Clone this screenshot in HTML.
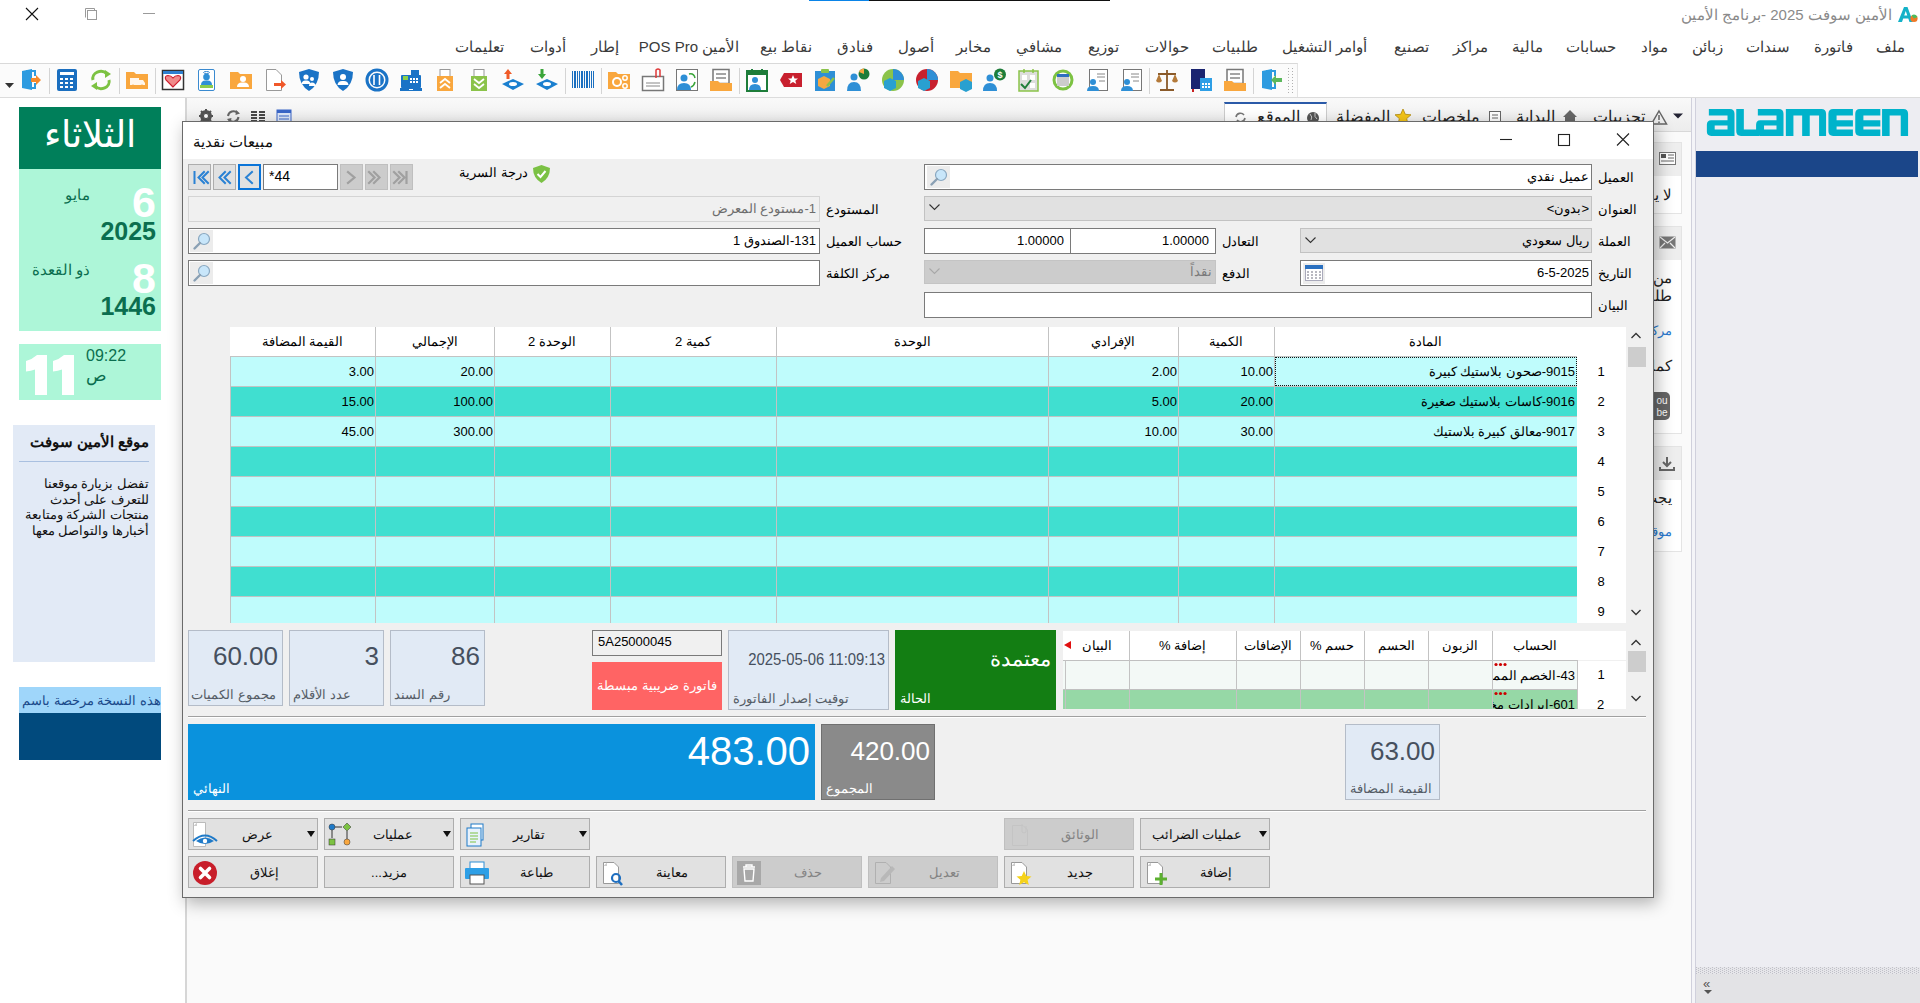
<!DOCTYPE html>
<html><head><meta charset="utf-8">
<style>
*{box-sizing:border-box;margin:0;padding:0}
html,body{width:1920px;height:1003px;overflow:hidden;background:#fff;font-family:"Liberation Sans",sans-serif;font-size:13px;color:#000}
.a{position:absolute}
.r{direction:rtl}
.t{white-space:nowrap}
svg{overflow:visible}
</style></head><body>
<div class="a" style="left:809px;top:0px;width:60px;height:1px;background:#0a84e8;"></div>
<div class="a" style="left:869px;top:0px;width:241px;height:1px;background:#111;"></div>
<svg class="a" style="left:0px;top:0px" width="200" height="30"><path d="M26 8 L38 20 M38 8 L26 20" stroke="#111" stroke-width="1.1" fill="none"/><rect x="87.5" y="10.5" width="9" height="9" fill="none" stroke="#9a9a9a"/><path d="M85.5 17.5 V8.5 H94.5 V10.5" fill="none" stroke="#9a9a9a"/><path d="M143 13.5 H155" stroke="#9a9a9a"/></svg>
<div class="a t r" style="top:3.0px;height:24px;line-height:24px;font-size:15px;color:#8a8a8a;right:28px;text-align:right;">الأمين سوفت 2025 -برنامج الأمين</div>
<svg class="a" style="left:1897px;top:5px" width="22" height="20"><path d="M1 17 L7 2 H10.5 L16 17 H12.5 L11.3 13.5 H6.2 L5 17Z M7.2 10.5 H10.3 L8.75 6Z" fill="#14b2c8" fill-rule="evenodd"/><circle cx="17" cy="13.5" r="3.6" fill="#f07a28"/><path d="M14.5 10.5 Q18 8 20.5 12 L17 13.5Z" fill="#4cbb5c"/></svg>
<div class="a t r" style="top:35.0px;height:24px;line-height:24px;font-size:15px;color:#3a3a3a;left:1790.0px;width:200px;text-align:center;">ملف</div>
<div class="a t r" style="top:35.0px;height:24px;line-height:24px;font-size:15px;color:#3a3a3a;left:1733.0px;width:200px;text-align:center;">فاتورة</div>
<div class="a t r" style="top:35.0px;height:24px;line-height:24px;font-size:15px;color:#3a3a3a;left:1668.0px;width:200px;text-align:center;">سندات</div>
<div class="a t r" style="top:35.0px;height:24px;line-height:24px;font-size:15px;color:#3a3a3a;left:1607.0px;width:200px;text-align:center;">زبائن</div>
<div class="a t r" style="top:35.0px;height:24px;line-height:24px;font-size:15px;color:#3a3a3a;left:1554.0px;width:200px;text-align:center;">مواد</div>
<div class="a t r" style="top:35.0px;height:24px;line-height:24px;font-size:15px;color:#3a3a3a;left:1490.5px;width:200px;text-align:center;">حسابات</div>
<div class="a t r" style="top:35.0px;height:24px;line-height:24px;font-size:15px;color:#3a3a3a;left:1427.0px;width:200px;text-align:center;">مالية</div>
<div class="a t r" style="top:35.0px;height:24px;line-height:24px;font-size:15px;color:#3a3a3a;left:1370.5px;width:200px;text-align:center;">مراكز</div>
<div class="a t r" style="top:35.0px;height:24px;line-height:24px;font-size:15px;color:#3a3a3a;left:1311.5px;width:200px;text-align:center;">تصنيع</div>
<div class="a t r" style="top:35.0px;height:24px;line-height:24px;font-size:15px;color:#3a3a3a;left:1224.5px;width:200px;text-align:center;">أوامر التشغيل</div>
<div class="a t r" style="top:35.0px;height:24px;line-height:24px;font-size:15px;color:#3a3a3a;left:1134.5px;width:200px;text-align:center;">طلبيات</div>
<div class="a t r" style="top:35.0px;height:24px;line-height:24px;font-size:15px;color:#3a3a3a;left:1066.5px;width:200px;text-align:center;">حوالات</div>
<div class="a t r" style="top:35.0px;height:24px;line-height:24px;font-size:15px;color:#3a3a3a;left:1003.0px;width:200px;text-align:center;">توزيع</div>
<div class="a t r" style="top:35.0px;height:24px;line-height:24px;font-size:15px;color:#3a3a3a;left:938.5px;width:200px;text-align:center;">مشافي</div>
<div class="a t r" style="top:35.0px;height:24px;line-height:24px;font-size:15px;color:#3a3a3a;left:873.5px;width:200px;text-align:center;">مخابر</div>
<div class="a t r" style="top:35.0px;height:24px;line-height:24px;font-size:15px;color:#3a3a3a;left:815.5px;width:200px;text-align:center;">أصول</div>
<div class="a t r" style="top:35.0px;height:24px;line-height:24px;font-size:15px;color:#3a3a3a;left:754.5px;width:200px;text-align:center;">فنادق</div>
<div class="a t r" style="top:35.0px;height:24px;line-height:24px;font-size:15px;color:#3a3a3a;left:686.0px;width:200px;text-align:center;">نقاط بيع</div>
<div class="a t r" style="top:35.0px;height:24px;line-height:24px;font-size:15px;color:#3a3a3a;left:589.0px;width:200px;text-align:center;">الأمين POS Pro</div>
<div class="a t r" style="top:35.0px;height:24px;line-height:24px;font-size:15px;color:#3a3a3a;left:504.5px;width:200px;text-align:center;">إطار</div>
<div class="a t r" style="top:35.0px;height:24px;line-height:24px;font-size:15px;color:#3a3a3a;left:448.0px;width:200px;text-align:center;">أدوات</div>
<div class="a t r" style="top:35.0px;height:24px;line-height:24px;font-size:15px;color:#3a3a3a;left:379.5px;width:200px;text-align:center;">تعليمات</div>
<div class="a" style="left:0px;top:63px;width:1298px;height:35px;background:#fbfbfb;border-top:1px solid #d9d9d9;border-bottom:1px solid #d9d9d9;border-right:1px solid #e4e4e4"></div>
<div class="a" style="left:49px;top:68px;width:1px;height:26px;background:#d4d4d4;"></div>
<div class="a" style="left:119px;top:68px;width:1px;height:26px;background:#d4d4d4;"></div>
<div class="a" style="left:155px;top:68px;width:1px;height:26px;background:#d4d4d4;"></div>
<div class="a" style="left:565px;top:68px;width:1px;height:26px;background:#d4d4d4;"></div>
<div class="a" style="left:601px;top:68px;width:1px;height:26px;background:#d4d4d4;"></div>
<div class="a" style="left:739px;top:68px;width:1px;height:26px;background:#d4d4d4;"></div>
<div class="a" style="left:1149px;top:68px;width:1px;height:26px;background:#d4d4d4;"></div>
<div class="a" style="left:1253px;top:68px;width:1px;height:26px;background:#d4d4d4;"></div>
<svg class="a" style="left:0px;top:0px" width="1300" height="100"><rect x="1288" y="68" width="1" height="1" fill="#b0b0b0"/><rect x="1292" y="68" width="1" height="1" fill="#b0b0b0"/><rect x="1288" y="71" width="1" height="1" fill="#b0b0b0"/><rect x="1292" y="71" width="1" height="1" fill="#b0b0b0"/><rect x="1288" y="74" width="1" height="1" fill="#b0b0b0"/><rect x="1292" y="74" width="1" height="1" fill="#b0b0b0"/><rect x="1288" y="77" width="1" height="1" fill="#b0b0b0"/><rect x="1292" y="77" width="1" height="1" fill="#b0b0b0"/><rect x="1288" y="80" width="1" height="1" fill="#b0b0b0"/><rect x="1292" y="80" width="1" height="1" fill="#b0b0b0"/><rect x="1288" y="83" width="1" height="1" fill="#b0b0b0"/><rect x="1292" y="83" width="1" height="1" fill="#b0b0b0"/><rect x="1288" y="86" width="1" height="1" fill="#b0b0b0"/><rect x="1292" y="86" width="1" height="1" fill="#b0b0b0"/><rect x="1288" y="89" width="1" height="1" fill="#b0b0b0"/><rect x="1292" y="89" width="1" height="1" fill="#b0b0b0"/><rect x="1288" y="92" width="1" height="1" fill="#b0b0b0"/><rect x="1292" y="92" width="1" height="1" fill="#b0b0b0"/></svg>
<svg class="a" style="left:4px;top:80px" width="12" height="10"><path d="M1 3 H10 L5.5 8Z" fill="#333"/></svg>
<svg class="a" style="left:19px;top:68px" width="24" height="24" viewBox="0 0 24 24"><path d="M3 3 L13 1 V22 L3 20Z" fill="#2d9be0"/><path d="M7 3 H16 V8" fill="none" stroke="#2d9be0" stroke-width="2"/><path d="M16 15 V20 H13" fill="none" stroke="#2d9be0" stroke-width="2"/><path d="M12 10 H17 V7 L22 12 L17 17 V14 H12Z" fill="#f58a2c"/></svg>
<svg class="a" style="left:55px;top:68px" width="24" height="24" viewBox="0 0 24 24"><rect x="2" y="1" width="20" height="22" rx="2" fill="#1b6fc0"/><rect x="5" y="4" width="14" height="3" fill="#fff"/><rect x="5" y="10" width="3" height="2" fill="#fff"/><rect x="5" y="14" width="3" height="2" fill="#fff"/><rect x="5" y="18" width="3" height="2" fill="#fff"/><rect x="10" y="10" width="3" height="2" fill="#fff"/><rect x="10" y="14" width="3" height="2" fill="#fff"/><rect x="10" y="18" width="3" height="2" fill="#fff"/><rect x="15" y="10" width="3" height="2" fill="#fff"/><rect x="15" y="14" width="3" height="2" fill="#fff"/><rect x="15" y="18" width="3" height="2" fill="#fff"/></svg>
<svg class="a" style="left:88.5px;top:68px" width="24" height="24" viewBox="0 0 24 24"><path d="M4 12 A8 7 0 0 1 18 6" fill="none" stroke="#7cc242" stroke-width="3"/><path d="M16 2 L22 6 L16 10Z" fill="#7cc242"/><path d="M20 12 A8 7 0 0 1 6 18" fill="none" stroke="#7cc242" stroke-width="3"/><path d="M8 14 L2 18 L8 22Z" fill="#7cc242"/></svg>
<svg class="a" style="left:125px;top:68px" width="24" height="24" viewBox="0 0 24 24"><path d="M1 4 H9 L11 6 H23 V21 H1Z" fill="#f9a73e"/><path d="M5 10 H14 V17 H5Z M14 12 H18 L20 15 V17 H14Z" fill="#fff" opacity=".9"/><circle cx="8" cy="18" r="1.6" fill="#f9a73e"/><circle cx="17" cy="18" r="1.6" fill="#f9a73e"/></svg>
<svg class="a" style="left:161px;top:68px" width="24" height="24" viewBox="0 0 24 24"><rect x="1.5" y="2.5" width="21" height="19" fill="#fff" stroke="#333" stroke-width="1.5"/><rect x="2" y="3" width="20" height="3" fill="#2f80d0"/><path d="M12 19 L5 12 Q3 8 7 7.5 Q10 7.5 12 10 Q14 7.5 17 7.5 Q21 8 19 12Z" fill="#f08a8a" stroke="#d02030" stroke-width="1.2"/></svg>
<svg class="a" style="left:195px;top:68px" width="24" height="24" viewBox="0 0 24 24"><rect x="3.5" y="1.5" width="16" height="21" rx="1.5" fill="#fff" stroke="#3a8ad0"/><circle cx="11.5" cy="9" r="3.3" fill="#2e8fd6"/><path d="M6 17 Q6 12 11.5 12.5 Q17 12 17 17Z" fill="#2e8fd6"/><rect x="5" y="17" width="13" height="3" fill="#8ccc4c"/><ellipse cx="11.5" cy="4.5" rx="3" ry="1" fill="none" stroke="#3a8ad0"/></svg>
<svg class="a" style="left:229px;top:68px" width="24" height="24" viewBox="0 0 24 24"><path d="M1 4 H9 L11 6 H23 V21 H1Z" fill="#f9a73e"/><circle cx="14" cy="11" r="3" fill="#fff"/><path d="M8 19 Q8 14 14 14.5 Q20 14 20 19Z" fill="#fff"/></svg>
<svg class="a" style="left:263px;top:68px" width="24" height="24" viewBox="0 0 24 24"><path d="M3.5 1.5 H13 L18.5 7 V22.5 H3.5Z" fill="#fff" stroke="#999"/><path d="M11 15 H18 V12 L23 16.5 L18 21 V18 H11Z" fill="#f0582a"/></svg>
<svg class="a" style="left:297px;top:68px" width="24" height="24" viewBox="0 0 24 24"><path d="M12 1 L22 4 Q22 17 12 23 Q2 17 2 4Z" fill="#1a73c6"/><circle cx="9" cy="9" r="2.6" fill="#fff"/><path d="M4.5 16 Q5 12 9 12.5 Q13 12 13.5 16Z" fill="#fff"/><circle cx="15" cy="11" r="2" fill="#fff"/><path d="M12 18 Q12 14.5 15 14.5 Q18.5 14.5 18.5 18Z" fill="#fff"/></svg>
<svg class="a" style="left:331px;top:68px" width="24" height="24" viewBox="0 0 24 24"><path d="M12 1 L22 4 Q22 17 12 23 Q2 17 2 4Z" fill="#1a73c6"/><circle cx="12" cy="9" r="3" fill="#fff"/><path d="M6.5 17 Q7 12.5 12 13 Q17 12.5 17.5 17Z" fill="#fff"/></svg>
<svg class="a" style="left:365px;top:68px" width="24" height="24" viewBox="0 0 24 24"><circle cx="12" cy="12" r="10" fill="none" stroke="#1a73c6" stroke-width="3"/><circle cx="12" cy="12" r="7" fill="#1a73c6"/><path d="M9 7 V17 M14.5 7 V17" stroke="#fff" stroke-width="1.6"/></svg>
<svg class="a" style="left:399px;top:68px" width="24" height="24" viewBox="0 0 24 24"><rect x="12" y="2" width="8" height="5" fill="#1a73c6"/><rect x="2" y="7" width="20" height="13" rx="1" fill="#1a73c6"/><rect x="4" y="8" width="5" height="4" fill="#8bd04a"/><rect x="11" y="10" width="2" height="2" fill="#fff"/><rect x="11" y="13" width="2" height="2" fill="#fff"/><rect x="14" y="10" width="2" height="2" fill="#fff"/><rect x="14" y="13" width="2" height="2" fill="#fff"/><rect x="17" y="10" width="2" height="2" fill="#fff"/><rect x="17" y="13" width="2" height="2" fill="#fff"/><rect x="1" y="20" width="22" height="3" fill="#1a73c6"/><rect x="10" y="21" width="4" height="1" fill="#fff"/></svg>
<svg class="a" style="left:433px;top:68px" width="24" height="24" viewBox="0 0 24 24"><rect x="7" y="1.5" width="10" height="7" fill="#fff" stroke="#999"/><rect x="4" y="8" width="16" height="15" fill="#f9a73e"/><path d="M7 15 L12 11 L17 15 M7 20 L12 16 L17 20" fill="none" stroke="#fff" stroke-width="1.8"/></svg>
<svg class="a" style="left:467px;top:68px" width="24" height="24" viewBox="0 0 24 24"><rect x="7" y="1.5" width="10" height="7" fill="#fff" stroke="#999"/><rect x="4" y="8" width="16" height="15" fill="#8bc34a"/><path d="M7 11 L12 15 L17 11 M7 16 L12 20 L17 16" fill="none" stroke="#fff" stroke-width="1.8"/></svg>
<svg class="a" style="left:500.5px;top:68px" width="24" height="24" viewBox="0 0 24 24"><path d="M1 16 L12 11 L23 16 L12 22Z" fill="#1a7fcf"/><ellipse cx="12" cy="16" rx="4" ry="2" fill="#fff"/><path d="M7 1 L11 6 H8.5 V11 H5.5 V6 H3Z" fill="#f05a28"/></svg>
<svg class="a" style="left:535px;top:68px" width="24" height="24" viewBox="0 0 24 24"><path d="M1 16 L12 11 L23 16 L12 22Z" fill="#1a7fcf"/><ellipse cx="12" cy="16" rx="4" ry="2" fill="#fff"/><path d="M5.5 1 H8.5 V6 H11 L7 11 L3 6 H5.5Z" fill="#3aa53a"/></svg>
<svg class="a" style="left:571px;top:68px" width="24" height="24" viewBox="0 0 24 24"><rect x="1" y="3" width="1" height="17" fill="#1a6fc0"/><rect x="3" y="3" width="2" height="17" fill="#1a6fc0"/><rect x="6" y="3" width="1" height="17" fill="#1a6fc0"/><rect x="8" y="3" width="1" height="17" fill="#1a6fc0"/><rect x="10" y="3" width="2" height="17" fill="#1a6fc0"/><rect x="13" y="3" width="1" height="17" fill="#1a6fc0"/><rect x="15" y="3" width="2" height="17" fill="#1a6fc0"/><rect x="18" y="3" width="1" height="17" fill="#1a6fc0"/><rect x="20" y="3" width="1" height="17" fill="#1a6fc0"/><rect x="22" y="3" width="1" height="17" fill="#1a6fc0"/></svg>
<svg class="a" style="left:607px;top:68px" width="24" height="24" viewBox="0 0 24 24"><path d="M1 4 H9 L11 6 H23 V21 H1Z" fill="#f9a73e"/><circle cx="10" cy="14" r="4" fill="none" stroke="#fff" stroke-width="2"/><circle cx="18" cy="10" r="2.2" fill="none" stroke="#fff" stroke-width="1.5"/><circle cx="18" cy="18" r="2.2" fill="none" stroke="#fff" stroke-width="1.5"/></svg>
<svg class="a" style="left:641px;top:68px" width="24" height="24" viewBox="0 0 24 24"><rect x="1.5" y="8.5" width="21" height="14" fill="#fff" stroke="#777" stroke-width="1.5"/><path d="M5 15 H19 M5 18 H19" stroke="#888"/><path d="M15 10 V2 Q17 0 19 2 V9" fill="none" stroke="#e03a3a" stroke-width="1.5"/></svg>
<svg class="a" style="left:675px;top:68px" width="24" height="24" viewBox="0 0 24 24"><rect x="1.5" y="1.5" width="21" height="21" fill="#fff" stroke="#777"/><circle cx="9" cy="10" r="3.5" fill="#2e8fd6"/><path d="M2 22 Q2 15 9 15 Q16 15 16 22Z" fill="#2e8fd6"/><path d="M14 6 Q19 5 20 10 M20 14 Q19 18 16 19" fill="none" stroke="#3aa53a" stroke-width="1.5"/></svg>
<svg class="a" style="left:709px;top:68px" width="24" height="24" viewBox="0 0 24 24"><rect x="4" y="1.5" width="16" height="14" fill="#fff" stroke="#777" stroke-width="1.5"/><path d="M7 6 H17 M7 10 H17" stroke="#888" stroke-width="1.5"/><path d="M1 13 H9 L11 15 H23 V23 H1Z" fill="#f9a73e"/></svg>
<svg class="a" style="left:744.5px;top:68px" width="24" height="24" viewBox="0 0 24 24"><rect x="2" y="3" width="20" height="20" fill="#fff" stroke="#1e7d3a" stroke-width="2"/><rect x="2" y="3" width="20" height="4" fill="#1e7d3a"/><path d="M7 1 V5 M17 1 V5" stroke="#1e7d3a" stroke-width="2"/><circle cx="10" cy="12" r="3" fill="#2e8fd6"/><path d="M4 22 Q4 16 10 16 Q16 16 16 22Z" fill="#2e8fd6"/></svg>
<svg class="a" style="left:779px;top:68px" width="24" height="24" viewBox="0 0 24 24"><path d="M5 5 H23 V19 H5 L1 12Z" fill="#c8202e"/><path d="M14 7 L15.5 10.5 H19 L16.3 12.7 L17.3 16 L14 14 L10.7 16 L11.7 12.7 L9 10.5 H12.5Z" fill="#fff"/></svg>
<svg class="a" style="left:813px;top:68px" width="24" height="24" viewBox="0 0 24 24"><rect x="2" y="3" width="20" height="20" fill="#2e8fd6"/><rect x="8" y="1" width="8" height="4" rx="1" fill="#8bc34a"/><path d="M5 11 L11 8 L17 11 V18 L11 21 L5 18Z" fill="#f5a742"/><path d="M14 18 L21 10" stroke="#8bc34a" stroke-width="2.5"/></svg>
<svg class="a" style="left:847px;top:68px" width="24" height="24" viewBox="0 0 24 24"><circle cx="7" cy="9" r="3.5" fill="#2e8fd6"/><path d="M0 23 Q0 14 7 14 Q14 14 14 23Z" fill="#2e8fd6"/><circle cx="17" cy="6" r="5.5" fill="#1e7d3a"/><path d="M17 6 V0.5 A5.5 5.5 0 0 0 12 4Z" fill="#f5a742"/></svg>
<svg class="a" style="left:881px;top:68px" width="24" height="24" viewBox="0 0 24 24"><circle cx="12" cy="12" r="11" fill="#8bc34a"/><path d="M12 12 V1 A11 11 0 0 1 23 12Z" fill="#2e8fd6"/><path d="M3 13 L9 10 L15 13 V20 L9 23 L3 20Z" fill="#29a0d0"/></svg>
<svg class="a" style="left:915px;top:68px" width="24" height="24" viewBox="0 0 24 24"><circle cx="12" cy="12" r="11" fill="#c8202e"/><path d="M12 12 V1 A11 11 0 0 1 23 12Z" fill="#2e8fd6"/><path d="M3 13 L9 10 L15 13 V20 L9 23 L3 20Z" fill="#29a0d0"/></svg>
<svg class="a" style="left:949px;top:68px" width="24" height="24" viewBox="0 0 24 24"><path d="M1 3 H9 L11 5 H23 V20 H1Z" fill="#f9a73e"/><path d="M11 14 L17 11 L23 14 V21 L17 24 L11 21Z" fill="#29a0d0"/></svg>
<svg class="a" style="left:983px;top:68px" width="24" height="24" viewBox="0 0 24 24"><circle cx="7" cy="10" r="3.5" fill="#2e8fd6"/><path d="M0 23 Q0 15 7 15 Q14 15 14 23Z" fill="#2e8fd6"/><circle cx="17" cy="6.5" r="6" fill="#1e7d3a"/><text x="17" y="10" font-size="9" font-weight="bold" fill="#fff" text-anchor="middle" font-family="Liberation Sans">$</text></svg>
<svg class="a" style="left:1017px;top:68px" width="24" height="24" viewBox="0 0 24 24"><rect x="2" y="3" width="19" height="20" fill="#ddd" stroke="#8bc34a" stroke-width="1.5"/><path d="M7 1 V5 M16 1 V5" stroke="#8bc34a" stroke-width="1.5"/><rect x="5" y="7" width="5" height="5" fill="#fff"/><rect x="13" y="7" width="5" height="5" fill="#fff"/><rect x="13" y="15" width="5" height="5" fill="#fff"/><path d="M4 16 L8 20 L14 12" fill="none" stroke="#1e7d3a" stroke-width="2"/></svg>
<svg class="a" style="left:1051px;top:68px" width="24" height="24" viewBox="0 0 24 24"><circle cx="12" cy="12" r="9" fill="none" stroke="#7cc242" stroke-width="3"/><rect x="6" y="6" width="12" height="12" fill="#ccc"/><rect x="6" y="6" width="12" height="3" fill="#2e6fc0"/></svg>
<svg class="a" style="left:1085px;top:68px" width="24" height="24" viewBox="0 0 24 24"><rect x="4.5" y="1.5" width="18" height="21" fill="#fff" stroke="#777"/><path d="M12 6 H20 M12 9 H20 M14 13 H20" stroke="#888"/><circle cx="8" cy="14" r="3" fill="#2e8fd6"/><path d="M2 23 Q2 18 8 18 Q14 18 14 23Z" fill="#2e8fd6"/></svg>
<svg class="a" style="left:1119px;top:68px" width="24" height="24" viewBox="0 0 24 24"><rect x="4.5" y="1.5" width="18" height="21" fill="#fff" stroke="#777"/><path d="M12 6 H20 M12 9 H20 M14 13 H20" stroke="#888"/><circle cx="8" cy="14" r="3" fill="#2e8fd6"/><path d="M2 23 Q2 18 8 18 Q14 18 14 23Z" fill="#2e8fd6"/></svg>
<svg class="a" style="left:1155px;top:68px" width="24" height="24" viewBox="0 0 24 24"><path d="M12 2 V21 M5 22 H19 M3 6 H21" stroke="#8a5a2a" stroke-width="1.8"/><path d="M1 13 L4 6 L7 13 Q4 16 1 13Z M17 13 L20 6 L23 13 Q20 16 17 13Z" fill="#b47a3a"/></svg>
<svg class="a" style="left:1189px;top:68px" width="24" height="24" viewBox="0 0 24 24"><rect x="2" y="1" width="14" height="20" fill="#1a2470"/><rect x="3" y="21" width="2" height="3" fill="#c82020"/><rect x="11" y="10" width="12" height="13" fill="#2e9fe6"/><rect x="13" y="15" width="2" height="2" fill="#fff"/><rect x="13" y="18" width="2" height="2" fill="#fff"/><rect x="16" y="15" width="2" height="2" fill="#fff"/><rect x="16" y="18" width="2" height="2" fill="#fff"/><rect x="19" y="15" width="2" height="2" fill="#fff"/><rect x="19" y="18" width="2" height="2" fill="#fff"/></svg>
<svg class="a" style="left:1223px;top:68px" width="24" height="24" viewBox="0 0 24 24"><rect x="4" y="1.5" width="16" height="14" fill="#fff" stroke="#777" stroke-width="1.5"/><path d="M7 6 H17 M7 10 H17" stroke="#888" stroke-width="1.5"/><path d="M1 13 H9 L11 15 H23 V23 H1Z" fill="#f9a73e"/></svg>
<svg class="a" style="left:1259px;top:68px" width="24" height="24" viewBox="0 0 24 24"><path d="M3 3 L13 1 V22 L3 20Z" fill="#2d9be0"/><path d="M7 3 H16 V8" fill="none" stroke="#2d9be0" stroke-width="2"/><path d="M16 15 V20 H13" fill="none" stroke="#2d9be0" stroke-width="2"/><path d="M23 10 H17 V7 L12 12 L17 17 V14 H23Z" fill="#5cb85c"/></svg>
<div class="a" style="left:0px;top:97px;width:1920px;height:1px;background:#dcdcdc;"></div>
<div class="a" style="left:185px;top:98px;width:1507px;height:905px;background:#fafafa;"></div>
<div class="a" style="left:185px;top:98px;width:2px;height:905px;background:#d6d6d6;"></div>
<div class="a" style="left:187px;top:98px;width:1504px;height:34px;background:linear-gradient(#f9f9f9,#ececec)"></div>
<div class="a" style="left:187px;top:131px;width:1504px;height:1px;background:#d8d8d8;"></div>
<svg class="a" style="left:198px;top:108px" width="100" height="16"><circle cx="8" cy="8" r="4.5" fill="none" stroke="#555" stroke-width="3"/><path d="M8 1 V15 M1 8 H15 M3 3 L13 13 M13 3 L3 13" stroke="#555" stroke-width="2"/><circle cx="8" cy="8" r="2" fill="#fff"/><path d="M30 8 A5.5 5.5 0 0 1 39.5 5 M40.5 9 A5.5 5.5 0 0 1 31 12" fill="none" stroke="#666" stroke-width="2"/><path d="M38 2 L42 5.5 L37.5 7Z M32.5 15 L29 11 L33.5 10Z" fill="#666"/><path d="M53 4 H59 M53 7 H59 M53 10 H59 M53 13 H59 M61 4 H67 M61 7 H67 M61 10 H67 M61 13 H67" stroke="#111" stroke-width="1.5"/><rect x="79" y="2" width="14" height="14" fill="#dde6f8" stroke="#3a66c8"/><rect x="79" y="2" width="14" height="3" fill="#3a66c8"/><path d="M81 8 H91 M81 11 H91 M81 14 H91" stroke="#3a66c8"/></svg>
<div class="a" style="left:1224px;top:102px;width:103px;height:30px;background:#fff;border-left:1px solid #ccc;border-right:1px solid #ccc;border-top:2px solid #2a5aa8"></div>
<div class="a t r" style="top:106.0px;height:22px;line-height:22px;font-size:16px;color:#222;right:620px;text-align:right;">الموقع</div>
<svg class="a" style="left:1306px;top:111px" width="14" height="14"><circle cx="7" cy="7" r="6" fill="#555"/><path d="M4 3 Q7 6 5 9 M9 2 Q8 6 11 8" stroke="#ccc" fill="none"/></svg>
<svg class="a" style="left:1234px;top:111px" width="13" height="13"><path d="M2 6 A4.5 4.5 0 0 1 10 4 M11 7 A4.5 4.5 0 0 1 3 9" fill="none" stroke="#777" stroke-width="1.6"/></svg>
<div class="a t r" style="top:106.0px;height:22px;line-height:22px;font-size:16px;color:#222;right:530px;text-align:right;">المفضلة</div>
<svg class="a" style="left:1394px;top:108px" width="18" height="18"><path d="M9 1 L11.3 6.3 L17 6.8 L12.7 10.6 L14 16.2 L9 13.2 L4 16.2 L5.3 10.6 L1 6.8 L6.7 6.3Z" fill="#f5c518" stroke="#b08a10" stroke-width=".8"/></svg>
<div class="a t r" style="top:106.0px;height:22px;line-height:22px;font-size:16px;color:#222;right:440px;text-align:right;">ملخصات</div>
<svg class="a" style="left:1488px;top:110px" width="14" height="14"><rect x="1.5" y="1.5" width="11" height="11" fill="#fff" stroke="#666"/><path d="M4 5 H10 M4 8 H10" stroke="#666"/></svg>
<div class="a t r" style="top:106.0px;height:22px;line-height:22px;font-size:16px;color:#222;right:365px;text-align:right;">البداية</div>
<svg class="a" style="left:1562px;top:109px" width="16" height="14"><path d="M8 1 L15 8 H13 V13 H3 V8 H1Z" fill="#666"/></svg>
<div class="a t r" style="top:106.0px;height:22px;line-height:22px;font-size:16px;color:#222;right:275px;text-align:right;">تجزيبات</div>
<svg class="a" style="left:1650px;top:109px" width="18" height="16"><path d="M9 2 L16.5 15 H1.5Z" fill="none" stroke="#666" stroke-width="1.5"/><path d="M9 6 V11 M9 12.5 V14" stroke="#666" stroke-width="1.5"/></svg>
<svg class="a" style="left:1672px;top:112px" width="12" height="8"><path d="M1 1.5 H11 L6 6.5Z" fill="#223"/></svg>
<div class="a" style="left:1640px;top:142px;width:42px;height:72px;background:#fff;border:1px solid #e4e4e4"></div>
<div class="a" style="left:1641px;top:143px;width:40px;height:33px;background:#eeeeee;"></div>
<div class="a" style="left:1640px;top:226px;width:42px;height:208px;background:#fff;border:1px solid #e4e4e4"></div>
<div class="a" style="left:1641px;top:227px;width:40px;height:33px;background:#eeeeee;"></div>
<div class="a" style="left:1640px;top:446px;width:42px;height:106px;background:#fff;border:1px solid #e4e4e4"></div>
<div class="a" style="left:1641px;top:447px;width:40px;height:33px;background:#eeeeee;"></div>
<svg class="a" style="left:1659px;top:152px" width="18" height="14"><rect x="0.5" y="0.5" width="16" height="12" fill="#fff" stroke="#777"/><rect x="2" y="2" width="5" height="4" fill="#555"/><path d="M9 3 H15 M9 6 H15 M2 9 H15" stroke="#666"/></svg>
<div class="a t r" style="top:185.0px;height:20px;line-height:20px;font-size:15px;color:#222;right:248px;text-align:right;">لا يوجد</div>
<svg class="a" style="left:1659px;top:236px" width="18" height="14"><rect x="0.5" y="0.5" width="16" height="12" fill="#777"/><path d="M1 1 L8.5 7 L16 1 M1 12 L6 7 M16 12 L11 7" stroke="#eee" stroke-width="1.2" fill="none"/></svg>
<div class="a t r" style="top:268.0px;height:20px;line-height:20px;font-size:15px;color:#222;right:248px;text-align:right;">من خلال</div>
<div class="a t r" style="top:286.0px;height:20px;line-height:20px;font-size:15px;color:#222;right:248px;text-align:right;">طلب الدعم</div>
<div class="a t r" style="top:321.0px;height:20px;line-height:20px;font-size:13px;color:#2a7ad0;right:248px;text-align:right;">مركز الدعم</div>
<div class="a t r" style="top:356.0px;height:20px;line-height:20px;font-size:15px;color:#222;right:248px;text-align:right;">كما يمكنك</div>
<svg class="a" style="left:1640px;top:392px" width="31" height="28"><rect x="0" y="0" width="30" height="28" rx="5" fill="#666"/><text x="22" y="12" font-size="10" fill="#fff" text-anchor="middle" font-family="Liberation Sans">ou</text><text x="22" y="24" font-size="10" fill="#fff" text-anchor="middle" font-family="Liberation Sans">be</text></svg>
<svg class="a" style="left:1659px;top:456px" width="16" height="16"><path d="M8 1 V10 M4 6 L8 10 L12 6 M1 11 V14 H15 V11" stroke="#666" stroke-width="2" fill="none"/></svg>
<div class="a t r" style="top:488.0px;height:20px;line-height:20px;font-size:15px;color:#222;right:248px;text-align:right;">يجب تحميل</div>
<div class="a t r" style="top:522.0px;height:20px;line-height:20px;font-size:13px;color:#2a7ad0;right:248px;text-align:right;">موقع التحميل</div>
<div class="a" style="left:1691px;top:98px;width:1px;height:905px;background:#d0d0dc;"></div>
<div class="a" style="left:1692px;top:98px;width:3px;height:905px;background:#f4f4f8;"></div>
<div class="a" style="left:1695px;top:98px;width:1px;height:905px;background:#d0d0dc;"></div>
<div class="a" style="left:1696px;top:98px;width:224px;height:905px;background:#ededf2;"></div>
<svg class="a" style="left:1696px;top:98px" width="224" height="82" viewBox="0 0 1920 703"><g fill="#00b3cb" fill-rule="evenodd"><path d="M110 95 H290 Q330 95 330 135 V325 H130 Q93 325 93 290 V230 Q93 190 130 190 H270 V150 H110Z M160 235 H270 V270 H160Z"/><path d="M345 95 H410 V270 H540 V325 H385 Q345 325 345 285Z"/><path d="M530 95 H710 Q750 95 750 135 V325 H550 Q515 325 515 290 V230 Q515 190 550 190 H690 V150 H530Z M583 235 H690 V270 H583Z"/><path d="M770 95 H1075 Q1115 95 1115 135 V325 H1055 V150 H975 V325 H910 V150 H835 V325 H770Z"/><path d="M1175 95 H1345 V150 H1205 V190 H1345 V245 H1205 V270 H1345 V325 H1175 Q1135 325 1135 285 V135 Q1135 95 1175 95Z"/><path d="M1405 95 H1580 V150 H1435 V190 H1580 V245 H1435 V270 H1580 V325 H1405 Q1365 325 1365 285 V135 Q1365 95 1405 95Z"/><path d="M1595 95 H1778 Q1818 95 1818 135 V325 H1755 V150 H1660 V325 H1595Z"/></g></svg>
<div class="a" style="left:1696px;top:151px;width:222px;height:26px;background:#1b4689;"></div>
<div class="a" style="left:1696px;top:967px;width:224px;height:7px;background:#e6e6ea;"></div>
<svg class="a" style="left:1696px;top:967px" width="224" height="7"><defs><pattern id="dp" width="4" height="2" patternUnits="userSpaceOnUse"><rect x="0" y="0" width="1" height="1" fill="#c0c0c8"/><rect x="2" y="1" width="1" height="1" fill="#c0c0c8"/></pattern></defs><rect width="224" height="7" fill="url(#dp)"/></svg>
<div class="a" style="left:1696px;top:974px;width:224px;height:29px;background:#e3e3e6;"></div>
<div class="a t" style="top:977.0px;height:14px;line-height:14px;font-size:13px;color:#555;left:1703px;">«</div>
<svg class="a" style="left:1703px;top:989px" width="10" height="6"><path d="M1 1 H9 L5 5Z" fill="#555"/></svg>
<div class="a" style="left:19px;top:107px;width:142px;height:62px;background:#007f5a;"></div>
<div class="a t r" style="top:109.5px;height:50px;line-height:50px;font-size:37px;color:#fff;left:18.5px;width:142px;text-align:center;">الثلاثاء</div>
<div class="a" style="left:19px;top:169px;width:142px;height:162px;background:#adf6d8;"></div>
<div class="a t" style="top:180.0px;height:44px;line-height:44px;font-size:43px;color:#fff;right:1764px;text-align:right;font-weight:bold;">6</div>
<div class="a t r" style="top:185.0px;height:20px;line-height:20px;font-size:15px;color:#0b6e4f;right:1830px;text-align:right;">مايو</div>
<div class="a t" style="top:217.0px;height:28px;line-height:28px;font-size:25px;color:#0b6e4f;right:1764px;text-align:right;font-weight:bold;">2025</div>
<div class="a t" style="top:256.0px;height:44px;line-height:44px;font-size:43px;color:#fff;right:1764px;text-align:right;font-weight:bold;">8</div>
<div class="a t r" style="top:260.0px;height:20px;line-height:20px;font-size:15px;color:#0b6e4f;right:1830px;text-align:right;">ذو القعدة</div>
<div class="a t" style="top:292.0px;height:28px;line-height:28px;font-size:25px;color:#0b6e4f;right:1764px;text-align:right;font-weight:bold;">1446</div>
<div class="a" style="left:19px;top:344px;width:142px;height:56px;background:#adf6d8;"></div>
<svg class="a" style="left:0px;top:0px" width="100" height="400"><path d="M47 355 V395 H35 V369.5 Q31 371 26 371.5 V361 Q32 359.5 37 355Z M74 355 V395 H62 V369.5 Q58 371 53 371.5 V361 Q59 359.5 64 355Z" fill="#fff"/></svg>
<div class="a t" style="top:347.0px;height:18px;line-height:18px;font-size:16px;color:#0b6e4f;left:86px;">09:22</div>
<div class="a t r" style="top:366.0px;height:20px;line-height:20px;font-size:17px;color:#0b6e4f;left:86px;">ص</div>
<div class="a" style="left:13px;top:425px;width:142px;height:237px;background:#e2eaf6;"></div>
<div class="a t r" style="top:432.0px;height:20px;line-height:20px;font-size:15px;color:#111;right:1771px;text-align:right;font-weight:bold;">موقع الأمين سوفت</div>
<div class="a" style="left:19px;top:461px;width:130px;height:1px;background:#a9c0e0;"></div>
<div class="a t r" style="top:476.0px;height:16px;line-height:16px;font-size:13px;color:#111;right:1771px;text-align:right;">تفضل بزيارة موقعنا</div>
<div class="a t r" style="top:491.7px;height:16px;line-height:16px;font-size:13px;color:#111;right:1771px;text-align:right;">للتعرف على أحدث</div>
<div class="a t r" style="top:507.4px;height:16px;line-height:16px;font-size:13px;color:#111;right:1771px;text-align:right;">منتجات الشركة ومتابعة</div>
<div class="a t r" style="top:523.1px;height:16px;line-height:16px;font-size:13px;color:#111;right:1771px;text-align:right;">أخبارها والتواصل معها</div>
<div class="a" style="left:19px;top:687px;width:142px;height:26px;background:#9fd6fa;"></div>
<div class="a" style="left:19px;top:687px;width:142px;height:26px;overflow:hidden"><div class="a t r" style="right:0;top:2px;height:23px;line-height:23px;font-size:13px;color:#1a4a8a">هذه النسخة مرخصة باسم</div></div>
<div class="a" style="left:19px;top:713px;width:142px;height:47px;background:#014a7d;"></div>
<div class="a" style="left:182px;top:121px;width:1472px;height:777px;background:#f0f0f0;border:1px solid #6a6a6a;box-shadow:3px 5px 16px rgba(0,0,0,.30)"></div>
<div class="a" style="left:183px;top:122px;width:1470px;height:37px;background:#fff;"></div>
<div class="a t r" style="top:130.5px;height:22px;line-height:22px;font-size:15px;color:#111;left:193px;">مبيعات نقدية</div>
<svg class="a" style="left:1495px;top:128px" width="140" height="24"><path d="M5 11.5 H17" stroke="#222" stroke-width="1.1"/><rect x="63.5" y="6.5" width="11" height="11" fill="none" stroke="#222" stroke-width="1.1"/><path d="M122 5.5 L134 17.5 M134 5.5 L122 17.5" stroke="#222" stroke-width="1.1"/></svg>
<div class="a" style="left:188px;top:164px;width:23px;height:26px;background:#e1e1e1;border:1px solid #adadad;"></div>
<div class="a" style="left:213px;top:164px;width:23px;height:26px;background:#e1e1e1;border:1px solid #adadad;"></div>
<div class="a" style="left:238px;top:164px;width:23px;height:26px;background:#e1e1e1;border:1px solid #0a74d8;"></div>
<div class="a" style="left:239px;top:165px;width:21px;height:24px;border:1px solid #0a74d8"></div>
<div class="a" style="left:263px;top:164px;width:75px;height:26px;background:#fff;border:1px solid #7a7a7a;"></div>
<div class="a t" style="top:168.0px;height:16px;line-height:16px;font-size:14px;color:#000;left:269px;">*44</div>
<div class="a" style="left:340px;top:164px;width:23px;height:26px;background:#cccccc;border:1px solid #bfbfbf;"></div>
<div class="a" style="left:365px;top:164px;width:23px;height:26px;background:#cccccc;border:1px solid #bfbfbf;"></div>
<div class="a" style="left:390px;top:164px;width:23px;height:26px;background:#cccccc;border:1px solid #bfbfbf;"></div>
<svg class="a" style="left:188px;top:164px" width="230" height="26"><g fill="none" stroke-width="2" stroke-linecap="square"><path d="M6.5 8 V19 M16 8 L10.5 13.5 L16 19 M20 8 L14.5 13.5 L20 19" stroke="#2a82d4"/><path d="M37 8 L31.5 13.5 L37 19 M42 8 L36.5 13.5 L42 19" stroke="#2a82d4"/><path d="M64 8 L58 13.5 L64 19" stroke="#2a82d4"/><path d="M160 8 L166.5 13.5 L160 19" stroke="#a0a0a0" stroke-width="2.2"/><path d="M181 8 L186.5 13.5 L181 19 M186 8 L191.5 13.5 L186 19" stroke="#a0a0a0" stroke-width="2.2"/><path d="M206 8 L211.5 13.5 L206 19 M211 8 L216.5 13.5 L211 19 M218.5 8 V19" stroke="#a0a0a0" stroke-width="2.2"/></g></svg>
<svg class="a" style="left:532px;top:164px" width="19" height="20"><path d="M9.5 1 L18 4 Q18 14 9.5 19 Q1 14 1 4Z" fill="#7bc144"/><path d="M5.5 10 L8.5 13 L13.5 7" fill="none" stroke="#fff" stroke-width="2"/></svg>
<div class="a t r" style="top:164.0px;height:18px;line-height:18px;font-size:13px;color:#000;right:1392px;text-align:right;">درجة السرية</div>
<div class="a" style="left:188px;top:196px;width:632px;height:26px;background:#f0f0f0;border:1px solid #d4d4d4;"></div>
<div class="a t r" style="top:200.0px;height:18px;line-height:18px;font-size:13px;color:#6d6d6d;right:1104px;text-align:right;">1-مستودع المعرض</div>
<div class="a t r" style="top:200.5px;height:18px;line-height:18px;font-size:13px;color:#000;left:826px;">المستودع</div>
<div class="a" style="left:188px;top:228px;width:632px;height:26px;background:#fff;border:1px solid #7a7a7a;"></div>
<div class="a" style="left:190px;top:230px;width:23px;height:22px;background:#ececec;"></div>
<svg class="a" style="left:191px;top:231px" width="22" height="20"><circle cx="13" cy="8" r="5.5" fill="#c8e6fa" stroke="#8aa8c0" stroke-width="1.2"/><path d="M9 12 L3.5 17.5" stroke="#8aa0b4" stroke-width="2.4" stroke-linecap="round"/></svg>
<div class="a t r" style="top:232.0px;height:18px;line-height:18px;font-size:13px;color:#000;right:1104px;text-align:right;">131-الصندوق 1</div>
<div class="a t r" style="top:232.5px;height:18px;line-height:18px;font-size:13px;color:#000;left:826px;">حساب العميل</div>
<div class="a" style="left:188px;top:260px;width:632px;height:26px;background:#fff;border:1px solid #7a7a7a;"></div>
<div class="a" style="left:190px;top:262px;width:23px;height:22px;background:#ececec;"></div>
<svg class="a" style="left:191px;top:263px" width="22" height="20"><circle cx="13" cy="8" r="5.5" fill="#c8e6fa" stroke="#8aa8c0" stroke-width="1.2"/><path d="M9 12 L3.5 17.5" stroke="#8aa0b4" stroke-width="2.4" stroke-linecap="round"/></svg>
<div class="a t r" style="top:264.5px;height:18px;line-height:18px;font-size:13px;color:#000;left:826px;">مركز الكلفة</div>
<div class="a" style="left:924px;top:164px;width:668px;height:26px;background:#fff;border:1px solid #7a7a7a;"></div>
<div class="a" style="left:927px;top:166px;width:23px;height:22px;background:#ececec;"></div>
<svg class="a" style="left:928px;top:167px" width="22" height="20"><circle cx="13" cy="8" r="5.5" fill="#c8e6fa" stroke="#8aa8c0" stroke-width="1.2"/><path d="M9 12 L3.5 17.5" stroke="#8aa0b4" stroke-width="2.4" stroke-linecap="round"/></svg>
<div class="a t r" style="top:167.5px;height:18px;line-height:18px;font-size:13px;color:#000;right:331px;text-align:right;">عميل نقدي</div>
<div class="a t r" style="top:169.0px;height:18px;line-height:18px;font-size:13px;color:#000;left:1598px;">العميل</div>
<div class="a" style="left:924px;top:196px;width:668px;height:25px;background:#e1e1e1;border:1px solid #c2c2c2;"></div>
<svg class="a" style="left:928px;top:202px" width="14" height="10"><path d="M1.5 2.5 L6.5 7.5 L11.5 2.5" fill="none" stroke="#333" stroke-width="1.1"/></svg>
<div class="a t r" style="top:199.5px;height:18px;line-height:18px;font-size:13px;color:#000;right:331px;text-align:right;">&lt;بدون&gt;</div>
<div class="a t r" style="top:201.0px;height:18px;line-height:18px;font-size:13px;color:#000;left:1598px;">العنوان</div>
<div class="a" style="left:1300px;top:228px;width:292px;height:25px;background:#e1e1e1;border:1px solid #c2c2c2;"></div>
<svg class="a" style="left:1304px;top:235px" width="14" height="10"><path d="M1.5 2.5 L6.5 7.5 L11.5 2.5" fill="none" stroke="#333" stroke-width="1.1"/></svg>
<div class="a t r" style="top:232.0px;height:18px;line-height:18px;font-size:13px;color:#000;right:331px;text-align:right;">ريال سعودي</div>
<div class="a t r" style="top:233.0px;height:18px;line-height:18px;font-size:13px;color:#000;left:1598px;">العملة</div>
<div class="a" style="left:1070px;top:228px;width:146px;height:26px;background:#fff;border:1px solid #7a7a7a;"></div>
<div class="a" style="left:924px;top:228px;width:147px;height:26px;background:#fff;border:1px solid #7a7a7a;"></div>
<div class="a t" style="top:231.5px;height:18px;line-height:18px;font-size:13px;color:#000;right:711px;text-align:right;">1.00000</div>
<div class="a t" style="top:231.5px;height:18px;line-height:18px;font-size:13px;color:#000;right:856px;text-align:right;">1.00000</div>
<div class="a t r" style="top:233.0px;height:18px;line-height:18px;font-size:13px;color:#000;left:1222px;">التعادل</div>
<div class="a" style="left:1300px;top:260px;width:292px;height:26px;background:#fff;border:1px solid #7a7a7a;"></div>
<svg class="a" style="left:1303px;top:263px" width="22" height="21"><rect x="0" y="0" width="22" height="21" fill="#ececec"/><rect x="2.5" y="2.5" width="17" height="15" fill="#fff" stroke="#aab"/><rect x="2" y="2" width="18" height="4" fill="#2a70c0"/><rect x="4" y="8" width="2" height="2" fill="#b8b8c0"/><rect x="4" y="11" width="2" height="2" fill="#b8b8c0"/><rect x="4" y="14" width="2" height="2" fill="#b8b8c0"/><rect x="8" y="8" width="2" height="2" fill="#b8b8c0"/><rect x="8" y="11" width="2" height="2" fill="#b8b8c0"/><rect x="8" y="14" width="2" height="2" fill="#b8b8c0"/><rect x="12" y="8" width="2" height="2" fill="#b8b8c0"/><rect x="12" y="11" width="2" height="2" fill="#b8b8c0"/><rect x="12" y="14" width="2" height="2" fill="#b8b8c0"/><rect x="16" y="8" width="2" height="2" fill="#b8b8c0"/><rect x="16" y="11" width="2" height="2" fill="#b8b8c0"/><rect x="16" y="14" width="2" height="2" fill="#b8b8c0"/></svg>
<div class="a t" style="top:263.5px;height:18px;line-height:18px;font-size:13px;color:#000;right:331px;text-align:right;">6-5-2025</div>
<div class="a t r" style="top:265.0px;height:18px;line-height:18px;font-size:13px;color:#000;left:1598px;">التاريخ</div>
<div class="a" style="left:924px;top:260px;width:292px;height:24px;background:#cccccc;border:1px solid #c4c4c4;"></div>
<svg class="a" style="left:928px;top:266px" width="14" height="10"><path d="M1.5 2.5 L6.5 7.5 L11.5 2.5" fill="none" stroke="#a8a8a8" stroke-width="1.1"/></svg>
<div class="a t r" style="top:263.0px;height:18px;line-height:18px;font-size:13px;color:#7a7a7a;right:708px;text-align:right;">نقداً</div>
<div class="a t r" style="top:265.0px;height:18px;line-height:18px;font-size:13px;color:#000;left:1222px;">الدفع</div>
<div class="a" style="left:924px;top:292px;width:668px;height:26px;background:#fff;border:1px solid #7a7a7a;"></div>
<div class="a t r" style="top:297.0px;height:18px;line-height:18px;font-size:13px;color:#000;left:1598px;">البيان</div>
<div class="a" style="left:230px;top:327px;width:1396px;height:29px;background:#fff;"></div>
<div class="a" style="left:230px;top:357px;width:1347px;height:29px;background:#bffcfc;"></div>
<div class="a" style="left:230px;top:387px;width:1347px;height:29px;background:#40dfd0;"></div>
<div class="a" style="left:230px;top:417px;width:1347px;height:29px;background:#bffcfc;"></div>
<div class="a" style="left:230px;top:447px;width:1347px;height:29px;background:#40dfd0;"></div>
<div class="a" style="left:230px;top:477px;width:1347px;height:29px;background:#bffcfc;"></div>
<div class="a" style="left:230px;top:507px;width:1347px;height:29px;background:#40dfd0;"></div>
<div class="a" style="left:230px;top:537px;width:1347px;height:29px;background:#bffcfc;"></div>
<div class="a" style="left:230px;top:567px;width:1347px;height:29px;background:#40dfd0;"></div>
<div class="a" style="left:230px;top:597px;width:1347px;height:26px;background:#bffcfc;"></div>
<div class="a" style="left:1577px;top:356px;width:49px;height:267px;background:#fff;"></div>
<div class="a" style="left:230px;top:356px;width:1347px;height:1px;background:#c3c3c3;"></div>
<div class="a" style="left:230px;top:386px;width:1347px;height:1px;background:#c3c3c3;"></div>
<div class="a" style="left:230px;top:416px;width:1347px;height:1px;background:#c3c3c3;"></div>
<div class="a" style="left:230px;top:446px;width:1347px;height:1px;background:#c3c3c3;"></div>
<div class="a" style="left:230px;top:476px;width:1347px;height:1px;background:#c3c3c3;"></div>
<div class="a" style="left:230px;top:506px;width:1347px;height:1px;background:#c3c3c3;"></div>
<div class="a" style="left:230px;top:536px;width:1347px;height:1px;background:#c3c3c3;"></div>
<div class="a" style="left:230px;top:566px;width:1347px;height:1px;background:#c3c3c3;"></div>
<div class="a" style="left:230px;top:596px;width:1347px;height:1px;background:#c3c3c3;"></div>
<div class="a" style="left:230px;top:356px;width:1px;height:267px;background:#c3c3c3;"></div>
<div class="a" style="left:375px;top:327px;width:1px;height:296px;background:#c3c3c3;"></div>
<div class="a" style="left:494px;top:327px;width:1px;height:296px;background:#c3c3c3;"></div>
<div class="a" style="left:610px;top:327px;width:1px;height:296px;background:#c3c3c3;"></div>
<div class="a" style="left:776px;top:327px;width:1px;height:296px;background:#c3c3c3;"></div>
<div class="a" style="left:1048px;top:327px;width:1px;height:296px;background:#c3c3c3;"></div>
<div class="a" style="left:1178px;top:327px;width:1px;height:296px;background:#c3c3c3;"></div>
<div class="a" style="left:1274px;top:327px;width:1px;height:296px;background:#c3c3c3;"></div>
<div class="a t r" style="top:333.0px;height:18px;line-height:18px;font-size:13px;color:#000;left:202.5px;width:200px;text-align:center;">القيمة المضافة</div>
<div class="a t r" style="top:333.0px;height:18px;line-height:18px;font-size:13px;color:#000;left:334.5px;width:200px;text-align:center;">الإجمالي</div>
<div class="a t r" style="top:333.0px;height:18px;line-height:18px;font-size:13px;color:#000;left:452.0px;width:200px;text-align:center;">الوحدة 2</div>
<div class="a t r" style="top:333.0px;height:18px;line-height:18px;font-size:13px;color:#000;left:593.0px;width:200px;text-align:center;">كمية 2</div>
<div class="a t r" style="top:333.0px;height:18px;line-height:18px;font-size:13px;color:#000;left:812.0px;width:200px;text-align:center;">الوحدة</div>
<div class="a t r" style="top:333.0px;height:18px;line-height:18px;font-size:13px;color:#000;left:1013.0px;width:200px;text-align:center;">الإفرادي</div>
<div class="a t r" style="top:333.0px;height:18px;line-height:18px;font-size:13px;color:#000;left:1126.0px;width:200px;text-align:center;">الكمية</div>
<div class="a t r" style="top:333.0px;height:18px;line-height:18px;font-size:13px;color:#000;left:1325.5px;width:200px;text-align:center;">المادة</div>
<div class="a t r" style="top:362.5px;height:18px;line-height:18px;font-size:13px;color:#000;right:345px;text-align:right;">9015-صحون بلاستيك كبيرة</div>
<div class="a t" style="top:362.5px;height:18px;line-height:18px;font-size:13px;color:#000;right:647px;text-align:right;">10.00</div>
<div class="a t" style="top:362.5px;height:18px;line-height:18px;font-size:13px;color:#000;right:743px;text-align:right;">2.00</div>
<div class="a t" style="top:362.5px;height:18px;line-height:18px;font-size:13px;color:#000;right:1427px;text-align:right;">20.00</div>
<div class="a t" style="top:362.5px;height:18px;line-height:18px;font-size:13px;color:#000;right:1546px;text-align:right;">3.00</div>
<div class="a t r" style="top:392.5px;height:18px;line-height:18px;font-size:13px;color:#000;right:345px;text-align:right;">9016-كاسات بلاستيك صغيرة</div>
<div class="a t" style="top:392.5px;height:18px;line-height:18px;font-size:13px;color:#000;right:647px;text-align:right;">20.00</div>
<div class="a t" style="top:392.5px;height:18px;line-height:18px;font-size:13px;color:#000;right:743px;text-align:right;">5.00</div>
<div class="a t" style="top:392.5px;height:18px;line-height:18px;font-size:13px;color:#000;right:1427px;text-align:right;">100.00</div>
<div class="a t" style="top:392.5px;height:18px;line-height:18px;font-size:13px;color:#000;right:1546px;text-align:right;">15.00</div>
<div class="a t r" style="top:422.5px;height:18px;line-height:18px;font-size:13px;color:#000;right:345px;text-align:right;">9017-معالق كبيرة بلاستيك</div>
<div class="a t" style="top:422.5px;height:18px;line-height:18px;font-size:13px;color:#000;right:647px;text-align:right;">30.00</div>
<div class="a t" style="top:422.5px;height:18px;line-height:18px;font-size:13px;color:#000;right:743px;text-align:right;">10.00</div>
<div class="a t" style="top:422.5px;height:18px;line-height:18px;font-size:13px;color:#000;right:1427px;text-align:right;">300.00</div>
<div class="a t" style="top:422.5px;height:18px;line-height:18px;font-size:13px;color:#000;right:1546px;text-align:right;">45.00</div>
<div class="a t" style="top:362.5px;height:18px;line-height:18px;font-size:13px;color:#000;left:1591.0px;width:20px;text-align:center;">1</div>
<div class="a t" style="top:392.5px;height:18px;line-height:18px;font-size:13px;color:#000;left:1591.0px;width:20px;text-align:center;">2</div>
<div class="a t" style="top:422.5px;height:18px;line-height:18px;font-size:13px;color:#000;left:1591.0px;width:20px;text-align:center;">3</div>
<div class="a t" style="top:452.5px;height:18px;line-height:18px;font-size:13px;color:#000;left:1591.0px;width:20px;text-align:center;">4</div>
<div class="a t" style="top:482.5px;height:18px;line-height:18px;font-size:13px;color:#000;left:1591.0px;width:20px;text-align:center;">5</div>
<div class="a t" style="top:512.5px;height:18px;line-height:18px;font-size:13px;color:#000;left:1591.0px;width:20px;text-align:center;">6</div>
<div class="a t" style="top:542.5px;height:18px;line-height:18px;font-size:13px;color:#000;left:1591.0px;width:20px;text-align:center;">7</div>
<div class="a t" style="top:572.5px;height:18px;line-height:18px;font-size:13px;color:#000;left:1591.0px;width:20px;text-align:center;">8</div>
<div class="a t" style="top:602.5px;height:18px;line-height:18px;font-size:13px;color:#000;left:1591.0px;width:20px;text-align:center;">9</div>
<div class="a" style="left:1275px;top:357px;width:302px;height:29px;border:1px dotted #111"></div>
<svg class="a" style="left:1626px;top:327px" width="20" height="296"><path d="M5.5 11 L10 6.5 L14.5 11" fill="none" stroke="#333" stroke-width="1.3"/><rect x="2" y="20" width="18" height="20" fill="#cdcdcd"/><path d="M5.5 283 L10 287.5 L14.5 283" fill="none" stroke="#333" stroke-width="1.3"/></svg>
<div class="a" style="left:1063px;top:631px;width:563px;height:29px;background:#fff;"></div>
<div class="a" style="left:1063px;top:661px;width:514px;height:28px;background:#f3f9f6;"></div>
<div class="a" style="left:1577px;top:661px;width:49px;height:48px;background:#fff;"></div>
<div class="a" style="left:1063px;top:690px;width:514px;height:19px;background:#96d8a6;"></div>
<div class="a" style="left:1063px;top:660px;width:514px;height:1px;background:#c0c0c0;"></div>
<div class="a" style="left:1063px;top:689px;width:514px;height:1px;background:#c0c0c0;"></div>
<div class="a" style="left:1065px;top:660px;width:1px;height:49px;background:#c3c3c3;"></div>
<div class="a" style="left:1129px;top:631px;width:1px;height:78px;background:#c3c3c3;"></div>
<div class="a" style="left:1236px;top:631px;width:1px;height:78px;background:#c3c3c3;"></div>
<div class="a" style="left:1300px;top:631px;width:1px;height:78px;background:#c3c3c3;"></div>
<div class="a" style="left:1364px;top:631px;width:1px;height:78px;background:#c3c3c3;"></div>
<div class="a" style="left:1428px;top:631px;width:1px;height:78px;background:#c3c3c3;"></div>
<div class="a" style="left:1492px;top:631px;width:1px;height:78px;background:#c3c3c3;"></div>
<div class="a" style="left:1577px;top:660px;width:1px;height:49px;background:#c3c3c3;"></div>
<div class="a t r" style="top:637.0px;height:18px;line-height:18px;font-size:13px;color:#000;left:1037.0px;width:120px;text-align:center;">البيان</div>
<div class="a t r" style="top:637.0px;height:18px;line-height:18px;font-size:13px;color:#000;left:1122.5px;width:120px;text-align:center;">إضافة %</div>
<div class="a t r" style="top:637.0px;height:18px;line-height:18px;font-size:13px;color:#000;left:1208.0px;width:120px;text-align:center;">الإضافات</div>
<div class="a t r" style="top:637.0px;height:18px;line-height:18px;font-size:13px;color:#000;left:1272.0px;width:120px;text-align:center;">حسم %</div>
<div class="a t r" style="top:637.0px;height:18px;line-height:18px;font-size:13px;color:#000;left:1336.0px;width:120px;text-align:center;">الحسم</div>
<div class="a t r" style="top:637.0px;height:18px;line-height:18px;font-size:13px;color:#000;left:1400.0px;width:120px;text-align:center;">الزبون</div>
<div class="a t r" style="top:637.0px;height:18px;line-height:18px;font-size:13px;color:#000;left:1474.5px;width:120px;text-align:center;">الحساب</div>
<svg class="a" style="left:1063px;top:640px" width="10" height="10"><path d="M1 5 L8 1 V9Z" fill="#e01010"/></svg>
<div class="a" style="left:1493px;top:661px;width:84px;height:48px;overflow:hidden">
<div class="a t r" style="right:2px;top:6px;height:18px;line-height:18px;font-size:13px">43-الخصم الممنوح</div>
<div class="a t r" style="right:2px;top:35px;height:18px;line-height:18px;font-size:13px">601-ايرادات مختلفة</div>
</div>
<svg class="a" style="left:1493px;top:661px" width="20" height="40"><circle cx="3" cy="3.5" r="1.6" fill="#c00"/><circle cx="7.5" cy="3.5" r="1.6" fill="#c00"/><circle cx="12" cy="3.5" r="1.6" fill="#c00"/><circle cx="3" cy="32.5" r="1.6" fill="#c00"/><circle cx="7.5" cy="32.5" r="1.6" fill="#c00"/><circle cx="12" cy="32.5" r="1.6" fill="#c00"/></svg>
<div class="a t" style="top:666.0px;height:18px;line-height:18px;font-size:13px;color:#000;left:1591.0px;width:20px;text-align:center;">1</div>
<div class="a" style="left:1577px;top:690px;width:49px;height:19px;overflow:hidden"><div class="a t" style="left:20px;top:6px;height:18px;line-height:18px;font-size:13px">2</div></div>
<svg class="a" style="left:1626px;top:631px" width="20" height="78"><path d="M5.5 14 L10 9.5 L14.5 14" fill="none" stroke="#333" stroke-width="1.3"/><rect x="2" y="20" width="18" height="21" fill="#cdcdcd"/><path d="M5.5 65 L10 69.5 L14.5 65" fill="none" stroke="#333" stroke-width="1.3"/></svg>
<div class="a" style="left:188px;top:630px;width:95px;height:76px;background:#e1eaf5;border:1px solid #b4bcc8;"></div>
<div class="a t" style="top:640.0px;height:32px;line-height:32px;font-size:26px;color:#46505e;right:1642px;text-align:right;">60.00</div>
<div class="a t r" style="top:686.0px;height:18px;line-height:18px;font-size:13px;color:#555d66;right:1644px;text-align:right;">مجموع الكميات</div>
<div class="a" style="left:289px;top:630px;width:95px;height:76px;background:#e1eaf5;border:1px solid #b4bcc8;"></div>
<div class="a t" style="top:640.0px;height:32px;line-height:32px;font-size:26px;color:#46505e;right:1541px;text-align:right;">3</div>
<div class="a t r" style="top:686.0px;height:18px;line-height:18px;font-size:13px;color:#555d66;right:1569px;text-align:right;">عدد الأقلام</div>
<div class="a" style="left:390px;top:630px;width:95px;height:76px;background:#e1eaf5;border:1px solid #b4bcc8;"></div>
<div class="a t" style="top:640.0px;height:32px;line-height:32px;font-size:26px;color:#46505e;right:1440px;text-align:right;">86</div>
<div class="a t r" style="top:686.0px;height:18px;line-height:18px;font-size:13px;color:#555d66;right:1470px;text-align:right;">رقم السند</div>
<div class="a" style="left:592px;top:630px;width:130px;height:26px;background:#f0f0f0;border:1px solid #7a7a7a;"></div>
<div class="a t" style="top:633.0px;height:18px;line-height:18px;font-size:13px;color:#000;left:598px;">5A25000045</div>
<div class="a" style="left:592px;top:662px;width:130px;height:48px;background:#ff6464;"></div>
<div class="a t r" style="top:677.0px;height:18px;line-height:18px;font-size:13px;color:#fff;left:592.0px;width:130px;text-align:center;">فاتورة ضريبية مبسطة</div>
<div class="a" style="left:728px;top:630px;width:161px;height:80px;background:#e1eaf5;border:1px solid #b4bcc8;"></div>
<div class="a t" style="top:648.0px;height:22px;line-height:22px;font-size:16.5px;color:#46505e;right:1035px;text-align:right;transform:scaleX(.9);transform-origin:100% 50%">2025-05-06 11:09:13</div>
<div class="a t r" style="top:690.0px;height:18px;line-height:18px;font-size:13px;color:#555d66;left:733px;">توقيت إصدار الفاتورة</div>
<div class="a" style="left:895px;top:630px;width:161px;height:80px;background:#137e13;"></div>
<div class="a t r" style="top:646.0px;height:26px;line-height:26px;font-size:21px;color:#fff;right:869px;text-align:right;">معتمدة</div>
<div class="a t r" style="top:690.0px;height:18px;line-height:18px;font-size:13px;color:#fff;left:900px;">الحالة</div>
<div class="a" style="left:188px;top:716px;width:1458px;height:1px;background:#a0a0a0;"></div>
<div class="a" style="left:188px;top:717px;width:1458px;height:1px;background:#fff;"></div>
<div class="a" style="left:188px;top:810px;width:1458px;height:1px;background:#a0a0a0;"></div>
<div class="a" style="left:188px;top:811px;width:1458px;height:1px;background:#fff;"></div>
<div class="a" style="left:188px;top:724px;width:627px;height:76px;background:#0a92dd;"></div>
<div class="a t" style="top:728.0px;height:46px;line-height:46px;font-size:40px;color:#fff;right:1110px;text-align:right;">483.00</div>
<div class="a t r" style="top:780.0px;height:18px;line-height:18px;font-size:13px;color:#fff;left:193px;">النهائي</div>
<div class="a" style="left:821px;top:724px;width:114px;height:76px;background:#8a8a8a;border:1px solid #707070;"></div>
<div class="a t" style="top:736.0px;height:30px;line-height:30px;font-size:26px;color:#fff;right:990px;text-align:right;">420.00</div>
<div class="a t r" style="top:780.0px;height:18px;line-height:18px;font-size:13px;color:#fff;left:826px;">المجموع</div>
<div class="a" style="left:1345px;top:724px;width:95px;height:76px;background:#e1eaf5;border:1px solid #b4bcc8;"></div>
<div class="a t" style="top:735.0px;height:32px;line-height:32px;font-size:26px;color:#46505e;right:485px;text-align:right;">63.00</div>
<div class="a t r" style="top:780.0px;height:18px;line-height:18px;font-size:13px;color:#555d66;left:1350px;">القيمة المضافة</div>
<div class="a" style="left:188px;top:818px;width:130px;height:32px;background:#e1e1e1;border:1px solid #adadad;"></div>
<div class="a t r" style="top:826.0px;height:18px;line-height:18px;font-size:13px;color:#111;left:197.0px;width:120px;text-align:center;">عرض</div>
<svg class="a" style="left:192px;top:822px" width="26" height="26" viewBox="0 0 26 26"><path d="M1.5 0.5 H13.5 V24.5 H1.5Z" fill="#fff" stroke="#bbb"/><path d="M1.5 4 L5 0.5 V4Z" fill="#ccc"/><path d="M1 19 Q13 8 25 19" fill="none" stroke="#1f7ac8" stroke-width="2"/><path d="M4 19 Q13 12 22 19 Q13 25 4 19Z" fill="#1f7ac8"/><circle cx="13" cy="19" r="2.2" fill="#fff"/></svg>
<svg class="a" style="left:306px;top:830px" width="10" height="8"><path d="M1 1 H9 L5 7Z" fill="#111"/></svg>
<div class="a" style="left:324px;top:818px;width:130px;height:32px;background:#e1e1e1;border:1px solid #adadad;"></div>
<div class="a t r" style="top:826.0px;height:18px;line-height:18px;font-size:13px;color:#111;left:333.0px;width:120px;text-align:center;">عمليات</div>
<svg class="a" style="left:328px;top:822px" width="26" height="26" viewBox="0 0 26 26"><circle cx="4" cy="5" r="3" fill="#1f7ac8" stroke="#333" stroke-width=".5"/><path d="M7 5 H14" stroke="#333"/><path d="M19 1 L23 5 L19 9 L15 5Z" fill="#7cc242" stroke="#333" stroke-width=".5"/><path d="M4 8 V16 M19 9 V17" stroke="#333"/><rect x="1" y="17" width="6" height="6" fill="#7cc242" stroke="#333" stroke-width=".5"/><circle cx="19" cy="20" r="3" fill="#f9a73e" stroke="#333" stroke-width=".5"/></svg>
<svg class="a" style="left:442px;top:830px" width="10" height="8"><path d="M1 1 H9 L5 7Z" fill="#111"/></svg>
<div class="a" style="left:460px;top:818px;width:130px;height:32px;background:#e1e1e1;border:1px solid #adadad;"></div>
<div class="a t r" style="top:826.0px;height:18px;line-height:18px;font-size:13px;color:#111;left:469.0px;width:120px;text-align:center;">تقارير</div>
<svg class="a" style="left:464px;top:822px" width="26" height="26" viewBox="0 0 26 26"><rect x="7" y="2" width="12" height="16" fill="#fff" stroke="#1f7ac8"/><rect x="3" y="6" width="14" height="18" fill="#e8f2fc" stroke="#1f7ac8"/><path d="M6 11 H14 M6 14 H14 M6 17 H14 M6 20 H12" stroke="#7cc242"/></svg>
<svg class="a" style="left:578px;top:830px" width="10" height="8"><path d="M1 1 H9 L5 7Z" fill="#111"/></svg>
<div class="a" style="left:1004px;top:818px;width:130px;height:32px;background:#cccccc;border:1px solid #bfbfbf;"></div>
<div class="a t r" style="top:826.0px;height:18px;line-height:18px;font-size:13px;color:#838383;left:1020.0px;width:120px;text-align:center;">الوثائق</div>
<svg class="a" style="left:1008px;top:822px" width="26" height="26" viewBox="0 0 26 26"><path d="M4.5 3.5 H15 L19.5 8 V23.5 H4.5Z" fill="none" stroke="#c4c4c4"/><path d="M14 2 V10 Q16 12 18 10 V4" fill="none" stroke="#c4c4c4"/></svg>
<div class="a" style="left:1140px;top:818px;width:130px;height:32px;background:#e1e1e1;border:1px solid #adadad;"></div>
<div class="a t r" style="top:826.0px;height:18px;line-height:18px;font-size:13px;color:#111;left:1137.0px;width:120px;text-align:center;">عمليات الضرائب</div>
<svg class="a" style="left:1258px;top:830px" width="10" height="8"><path d="M1 1 H9 L5 7Z" fill="#111"/></svg>
<div class="a" style="left:188px;top:856px;width:130px;height:32px;background:#e1e1e1;border:1px solid #adadad;"></div>
<div class="a t r" style="top:864.0px;height:18px;line-height:18px;font-size:13px;color:#111;left:204.0px;width:120px;text-align:center;">إغلاق</div>
<svg class="a" style="left:192px;top:860px" width="26" height="26" viewBox="0 0 26 26"><circle cx="13" cy="13" r="12" fill="#c81e2a"/><path d="M8.5 8.5 L17.5 17.5 M17.5 8.5 L8.5 17.5" stroke="#fff" stroke-width="3.6" stroke-linecap="round"/></svg>
<div class="a" style="left:324px;top:856px;width:130px;height:32px;background:#e1e1e1;border:1px solid #adadad;"></div>
<div class="a t r" style="top:864.0px;height:18px;line-height:18px;font-size:13px;color:#111;left:329.0px;width:120px;text-align:center;">مزيد...</div>
<div class="a" style="left:460px;top:856px;width:130px;height:32px;background:#e1e1e1;border:1px solid #adadad;"></div>
<div class="a t r" style="top:864.0px;height:18px;line-height:18px;font-size:13px;color:#111;left:476.0px;width:120px;text-align:center;">طباعة</div>
<svg class="a" style="left:464px;top:860px" width="26" height="26" viewBox="0 0 26 26"><rect x="6" y="2" width="14" height="7" fill="#fff" stroke="#2e8fd6"/><rect x="1" y="8" width="24" height="11" rx="1" fill="#2e9fe6"/><rect x="6" y="15" width="14" height="9" fill="#fff" stroke="#555"/></svg>
<div class="a" style="left:596px;top:856px;width:130px;height:32px;background:#e1e1e1;border:1px solid #adadad;"></div>
<div class="a t r" style="top:864.0px;height:18px;line-height:18px;font-size:13px;color:#111;left:612.0px;width:120px;text-align:center;">معاينة</div>
<svg class="a" style="left:600px;top:860px" width="26" height="26" viewBox="0 0 26 26"><path d="M3.5 2.5 H14 L18.5 7 V23.5 H3.5Z" fill="#fff" stroke="#999"/><path d="M3.5 6 L7 2.5 V6Z" fill="#ccc"/><circle cx="16" cy="18" r="4" fill="none" stroke="#1f6fc0" stroke-width="2.2"/><path d="M18.5 21 L22 25" stroke="#1f6fc0" stroke-width="2.5"/></svg>
<div class="a" style="left:732px;top:856px;width:130px;height:32px;background:#cccccc;border:1px solid #bfbfbf;"></div>
<div class="a t r" style="top:864.0px;height:18px;line-height:18px;font-size:13px;color:#838383;left:748.0px;width:120px;text-align:center;">حذف</div>
<svg class="a" style="left:736px;top:860px" width="26" height="26" viewBox="0 0 26 26"><rect x="1" y="1" width="24" height="24" fill="#a8a8a8"/><path d="M7 7 H19 M10 7 V5 H16 V7 M8 9 H18 L17 21 H9Z" fill="none" stroke="#fff" stroke-width="1.4"/></svg>
<div class="a" style="left:868px;top:856px;width:130px;height:32px;background:#cccccc;border:1px solid #bfbfbf;"></div>
<div class="a t r" style="top:864.0px;height:18px;line-height:18px;font-size:13px;color:#838383;left:884.0px;width:120px;text-align:center;">تعديل</div>
<svg class="a" style="left:872px;top:860px" width="26" height="26" viewBox="0 0 26 26"><path d="M3.5 2.5 H14 L18.5 7 V23.5 H3.5Z" fill="none" stroke="#b0b0b0"/><path d="M9 18 L20 6 L23 9 L12 21 L8 22Z" fill="#b8b8b8"/></svg>
<div class="a" style="left:1004px;top:856px;width:130px;height:32px;background:#e1e1e1;border:1px solid #adadad;"></div>
<div class="a t r" style="top:864.0px;height:18px;line-height:18px;font-size:13px;color:#111;left:1020.0px;width:120px;text-align:center;">جديد</div>
<svg class="a" style="left:1008px;top:860px" width="26" height="26" viewBox="0 0 26 26"><path d="M3.5 2.5 H14 L18.5 7 V23.5 H3.5Z" fill="#fff" stroke="#999"/><path d="M3.5 6 L7 2.5 V6Z" fill="#ccc"/><path d="M16 11 L18.3 16 L23.5 16.4 L19.6 19.8 L20.8 25 L16 22.2 L11.2 25 L12.4 19.8 L8.5 16.4 L13.7 16Z" fill="#f5d21a"/></svg>
<div class="a" style="left:1140px;top:856px;width:130px;height:32px;background:#e1e1e1;border:1px solid #adadad;"></div>
<div class="a t r" style="top:864.0px;height:18px;line-height:18px;font-size:13px;color:#111;left:1156.0px;width:120px;text-align:center;">إضافة</div>
<svg class="a" style="left:1144px;top:860px" width="26" height="26" viewBox="0 0 26 26"><path d="M3.5 2.5 H14 L18.5 7 V23.5 H3.5Z" fill="#fff" stroke="#999"/><path d="M3.5 6 L7 2.5 V6Z" fill="#ccc"/><path d="M17 13 V25 M11 19 H23" stroke="#5cb030" stroke-width="3"/></svg>
</body></html>
